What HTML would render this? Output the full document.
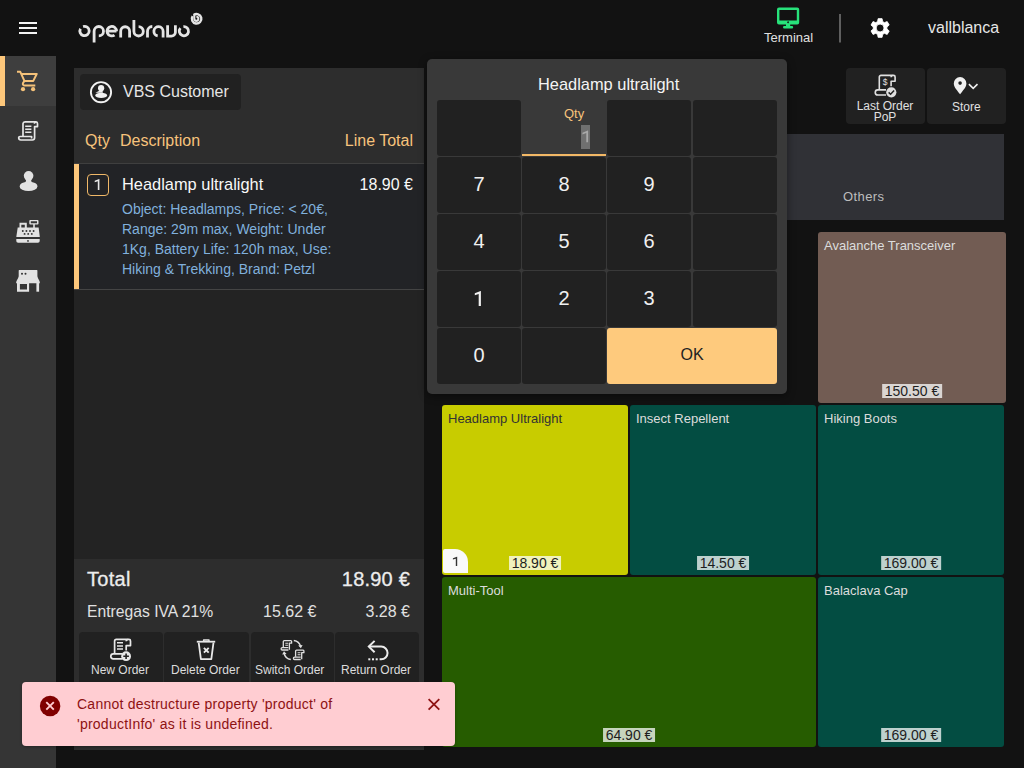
<!DOCTYPE html>
<html><head><meta charset="utf-8">
<style>
*{box-sizing:border-box;margin:0;padding:0}
html,body{width:1024px;height:768px;overflow:hidden;background:#121212;font-family:"Liberation Sans",sans-serif;color:#e6e6e6}
.a{position:absolute}
.t{position:absolute;white-space:nowrap;line-height:1}
svg{position:absolute;overflow:visible}
/* sidebar */
#side{left:0;top:56px;width:56px;height:712px;background:#353535}
#act{left:0;top:56px;width:56px;height:50px;background:#3e3e3e}
#actbar{left:0;top:56px;width:5px;height:50px;background:#fdc77b}
/* order panel */
#panel{left:74px;top:68px;width:350px;height:682px;background:#2d2d2d}
#lines{left:74px;top:164px;width:350px;height:395px;background:#232323}
#sel{left:74px;top:164px;width:350px;height:126px;background:#222326;border-bottom:1px solid #444444}
#selbar{left:74px;top:164px;width:5px;height:125px;background:#fdc77b}
#cust{left:80px;top:74px;width:161px;height:36px;background:#212121;border-radius:4px}
.btn{position:absolute;background:#212121;border-radius:4px}
/* dialog */
#dlg{left:427px;top:59px;width:360px;height:335px;background:#393939;border-radius:5px;box-shadow:0 2px 8px rgba(0,0,0,.45)}
.key{position:absolute;background:#212121;border-radius:3px;color:#f0f0f0;font-size:20px;text-align:center;width:84px;height:56px;line-height:54px}
/* tiles */
.tile{position:absolute;border-radius:3px;overflow:hidden}
.tile .nm{position:absolute;left:6px;top:7px;font-size:13px;color:#dcdcdc;white-space:nowrap;line-height:1}
.tile .pr{position:absolute;bottom:5px;left:50%;transform:translateX(-50%);background:rgba(255,255,255,.74);color:#1e1e1e;font-size:14px;line-height:14px;padding:0 2.6px;white-space:nowrap}
.or{color:#f7c37c}
</style></head><body>

<!-- ===== header ===== -->
<div class="a" style="left:19px;top:22px;width:18px;height:2px;background:#f2f2f2"></div>
<div class="a" style="left:19px;top:27px;width:18px;height:2px;background:#f2f2f2"></div>
<div class="a" style="left:19px;top:32px;width:18px;height:2px;background:#f2f2f2"></div>

<svg width="1024" height="60" style="left:0;top:0" viewBox="0 0 1024 60">
 <g fill="none" stroke="#e4e4e4" stroke-width="2.8">
  <path d="M83.1 26.6 A4.65 4.65 0 1 1 80.5 28.7"/>
  <path d="M94.1 42.4 V31.2 A4.7 4.7 0 1 1 98.8 35.9"/>
  <path d="M116.55 31.2 A4.75 4.75 0 1 0 114.52 35.09 M107.1 31.2 H116.5"/>
  <path d="M120.7 37.5 V31.2 A4.45 4.45 0 0 1 129.6 31.2 V37.5"/>
  <path d="M133.9 20 V31.3 A4.7 4.7 0 1 0 138.6 26.6"/>
  <path d="M147.5 37.5 V31.3 A4.8 4.8 0 0 1 152.3 26.5"/>
  <path d="M163.1 37.5 V31.3 A4.6 4.6 0 1 0 157.7 35.83"/>
  <path d="M167.6 25.2 V36.2 H171.2 A4 4 0 0 0 175.4 32.2 V25.2"/>
  <path d="M183.4 26.6 A4.6 4.6 0 1 1 180.4 28.2"/>
  <path d="M193.7 15 A4.75 4.75 0 1 1 192.6 16.2" stroke-width="2.4"/>
  <path d="M194.3 14.3 V18.8 A2.05 2.05 0 1 0 196.35 16.75" stroke-width="2.1"/>
 </g>
 <!-- terminal -->
 <g fill="#27e27a">
  <path d="M779 7.6 H797.2 A2 2 0 0 1 799.2 9.6 V22.5 A2 2 0 0 1 797.2 24.5 H779 A2 2 0 0 1 777 22.5 V9.6 A2 2 0 0 1 779 7.6 Z M779.4 10.1 V20.5 H796.8 V10.1 Z M788.9 22.3 A0.85 0.85 0 1 0 788.9 22.31Z" fill-rule="evenodd"/>
  <path d="M786 24 H790.2 V26 H792 A1.2 1.2 0 0 1 792 28.4 H784.2 A1.2 1.2 0 0 1 784.2 26 H786Z"/>
 </g>
 <rect x="839" y="14" width="2" height="28.5" fill="#5f5f5f"/>
 <path fill="#ffffff" stroke="#ffffff" stroke-width="0.9" stroke-linejoin="round" fill-rule="evenodd" d="M877.63 21.56 L878.11 18.66 L882.09 18.66 L882.57 21.56 L884.44 22.64 L887.20 21.61 L889.18 25.05 L886.92 26.92 L886.92 29.08 L889.18 30.95 L887.20 34.39 L884.44 33.36 L882.57 34.44 L882.09 37.34 L878.11 37.34 L877.63 34.44 L875.76 33.36 L873.00 34.39 L871.02 30.95 L873.28 29.08 L873.28 26.92 L871.02 25.05 L873.00 21.61 L875.76 22.64ZM884.05 28.0 A3.95 3.95 0 1 0 876.15 28.0 A3.95 3.95 0 1 0 884.05 28.0Z"/>
</svg>
<div class="t" style="left:764px;top:31px;font-size:13px;color:#e0e0e0">Terminal</div>
<div class="t" style="left:928px;top:20px;font-size:16px;color:#e6e6e6">vallblanca</div>

<!-- ===== sidebar ===== -->
<div id="side" class="a"></div>
<div id="act" class="a"></div>
<div id="actbar" class="a"></div>
<svg width="56" height="320" style="left:0;top:0" viewBox="0 0 56 320">
 <g fill="none" stroke="#f5c27a" stroke-width="2" stroke-linejoin="round">
  <path d="M17 71.8 H20.3 L24.4 80.9 H33.3 L36.7 74 H21.4"/>
  <path d="M24.4 80.9 L22.9 83.3 Q22.5 85.4 24.8 85.4 H35.3"/>
 </g>
 <g fill="#f5c27a"><circle cx="23" cy="89.2" r="2.1"/><circle cx="33.1" cy="89.2" r="2.1"/></g>
 <!-- receipt -->
 <g fill="none" stroke="#e6e6e6" stroke-width="1.7" stroke-linejoin="round">
  <path d="M23 136.5 V123.7 A2 2 0 0 1 25 121.9 H36 A1.8 1.8 0 0 1 37.5 123.7 V126.6 H34.6 V137.8 A2.2 2.2 0 0 1 32.4 140 H20.8 A2.2 2.2 0 0 1 18.7 137.8 A1.3 1.3 0 0 1 20 136.5 H31.6 V138.6"/>
  <path d="M34.6 123.8 A1.4 1.4 0 0 1 36 122"/>
  <path d="M25.2 126.2 H31.4 M25.2 129.3 H31.4 M25.2 132.2 H31.4" stroke-width="1.5"/>
 </g>
 <!-- person -->
 <g fill="#e2e2e2">
  <circle cx="28.6" cy="175.8" r="4.8"/>
  <path d="M26.2 179.5 H31 L31.6 182 A8.8 4.3 0 1 1 25.6 182Z"/>
  <ellipse cx="28.5" cy="186.7" rx="8.8" ry="4.3"/>
 </g>
 <!-- register -->
 <g fill="#e2e2e2">
  <path d="M19.5 222.7 H26.8 V228 H19.5Z M21.3 224.7 V227.9 H24.8 V224.7Z" fill-rule="evenodd"/>
  <path d="M30.2 220 H37.6 A0.9 0.9 0 0 1 38.5 220.9 V223.6 A0.9 0.9 0 0 1 37.6 224.5 H34.8 V228 H33.2 V224.5 H30.2 A0.9 0.9 0 0 1 29.3 223.6 V220.9 A0.9 0.9 0 0 1 30.2 220Z M30.8 221.3 V223.2 H37 V221.3Z" fill-rule="evenodd"/>
  <path d="M17.7 227.6 H38.6 L39.8 236.9 H16.3Z"/>
  <path d="M16.3 238.9 H39.7 V241 A1.8 1.8 0 0 1 37.9 242.8 H18.1 A1.8 1.8 0 0 1 16.3 241Z"/>
 </g>
 <g fill="#333333">
  <circle cx="22.8" cy="231" r="0.95"/><circle cx="26.4" cy="231" r="0.95"/><circle cx="30" cy="231" r="0.95"/><circle cx="33.6" cy="231" r="0.95"/>
  <circle cx="24.6" cy="233.9" r="0.95"/><circle cx="28.2" cy="233.9" r="0.95"/><circle cx="31.8" cy="233.9" r="0.95"/>
  <circle cx="28" cy="240.9" r="0.9"/>
 </g>
 <!-- store -->
 <g fill="#e2e2e2">
  <path d="M19.3 270 H36.8 A0.6 0.6 0 0 1 37.4 270.6 V276.3 Q37.7 278.2 39.2 280.6 Q39.9 281.8 39.9 283.3 H16.1 Q16.1 281.8 16.8 280.6 Q18.4 278.2 18.7 276.3 V270.6 A0.6 0.6 0 0 1 19.3 270Z"/>
  <path d="M17 283 H29.1 V291.7 H17Z M19.9 284.1 V289.4 H27 V284.1Z" fill-rule="evenodd"/>
  <rect x="36.4" y="283" width="2.7" height="8.7"/>
 </g>
 <g fill="#333"><circle cx="22" cy="273.7" r="1"/><circle cx="25.5" cy="273.7" r="1"/></g>
</svg>

<!-- ===== order panel ===== -->
<div id="panel" class="a"></div>
<div id="lines" class="a"></div>
<div id="sel" class="a"></div>
<div id="selbar" class="a"></div>
<div id="cust" class="a"></div>
<svg width="30" height="30" style="left:86px;top:76px" viewBox="86 76 30 30">
 <circle cx="101" cy="92.2" r="10.1" fill="none" stroke="#f2f2f2" stroke-width="1.9"/>
 <g fill="#f2f2f2"><circle cx="101.1" cy="88.2" r="3.1"/><path d="M99.8 90.5 H102.4 L102.9 92.8 H95.4 Z"/><ellipse cx="101.2" cy="95.4" rx="5.9" ry="2.6"/></g>
</svg>
<div class="t" style="left:123px;top:84px;font-size:16px;color:#e6e6e6">VBS Customer</div>

<div class="t or" style="left:85px;top:133px;font-size:16px">Qty</div>
<div class="t or" style="left:120px;top:133px;font-size:16px">Description</div>
<div class="t or" style="right:611px;top:133px;font-size:16px">Line Total</div>
<div class="a" style="left:74px;top:163px;width:350px;height:1px;background:#3f3f3f"></div>

<div class="a" style="left:87px;top:174px;width:22px;height:22px;border:1px solid #f0b868;border-radius:4px"></div>
<div class="t" style="left:122px;top:176px;font-size:16.4px;color:#f8f8f8">Headlamp ultralight</div>
<div class="t" style="right:611px;top:177px;font-size:16px;color:#f8f8f8">18.90 €</div>
<div class="a" style="left:122px;top:199px;width:240px;font-size:14px;line-height:20px;color:#80b0dc">Object: Headlamps, Price: &lt; 20€,<br>Range: 29m max, Weight: Under<br>1Kg, Battery Life: 120h max, Use:<br>Hiking &amp; Trekking, Brand: Petzl</div>

<!-- totals -->
<div class="t" style="left:87px;top:569px;font-size:20px;color:#ececec;-webkit-text-stroke:0.3px #ececec;letter-spacing:0.3px">Total</div>
<div class="t" style="right:614px;top:569px;font-size:20px;color:#ececec;-webkit-text-stroke:0.3px #ececec;letter-spacing:0.2px">18.90 €</div>
<div class="t" style="left:87px;top:604px;font-size:15.7px;color:#e0e0e0">Entregas IVA 21%</div>
<div class="t" style="left:263px;top:604px;font-size:16px;color:#e0e0e0">15.62 €</div>
<div class="t" style="right:614px;top:604px;font-size:16px;color:#e0e0e0">3.28 €</div>

<div class="btn" style="left:79px;top:632px;width:84px;height:56px"></div>
<div class="btn" style="left:164px;top:632px;width:85px;height:56px"></div>
<div class="btn" style="left:251px;top:632px;width:83px;height:56px"></div>
<div class="btn" style="left:335px;top:632px;width:84px;height:56px"></div>
<div class="t" style="left:91px;top:664px;font-size:12px;color:#dcdcdc">New Order</div>
<div class="t" style="left:171px;top:664px;font-size:12px;color:#dcdcdc">Delete Order</div>
<div class="t" style="left:255px;top:664px;font-size:12px;color:#dcdcdc">Switch Order</div>
<div class="t" style="left:341px;top:664px;font-size:12px;color:#dcdcdc">Return Order</div>

<svg width="1024" height="768" style="left:0;top:0;z-index:5;pointer-events:none" viewBox="0 0 1024 768">
 <!-- new order -->
 <g fill="none" stroke="#e8e8e8" stroke-width="1.7" stroke-linejoin="round">
  <path d="M114.6 653.2 V641.2 A1.8 1.8 0 0 1 116.4 639.4 H128.9 A1.6 1.6 0 0 1 130.5 641 V645.6 H126.2 V650.5"/>
  <path d="M126.2 641.3 A1.6 1.6 0 0 1 127.8 639.6"/>
  <path d="M122.5 653.8 H113.3 A2.5 2.5 0 0 0 113.3 658.8 H122.5"/>
  <path d="M117 642.7 H123 M117 645.9 H123 M117 649.1 H123" stroke-width="1.5"/>
 </g>
 <circle cx="126.1" cy="656.2" r="4.9" fill="#e8e8e8"/>
 <path d="M123.3 656.2 H128.9 M126.1 653.4 V659" stroke="#222" stroke-width="1.6"/>
 <!-- delete -->
 <g fill="none" stroke="#e8e8e8" stroke-width="1.8" stroke-linejoin="round">
  <path d="M196.8 641.7 H215.2"/>
  <path d="M203.6 641 V640 H209 V641" stroke-width="1.4"/>
  <path d="M198.7 642.6 L200.9 659.1 H211.3 L213.5 642.6"/>
  <path d="M203.9 647.8 L208.7 652.6 M208.7 647.8 L203.9 652.6" stroke-width="1.9"/>
 </g>
 <!-- switch -->
 <g fill="none" stroke="#e0e0e0" stroke-width="1.3" stroke-linejoin="round">
  <path d="M283.3 647.3 V641.6 A1 1 0 0 1 284.3 640.6 H290.8 A0.9 0.9 0 0 1 291.6 641.5 V643.2 H289.4 V649.7"/>
  <path d="M288.4 647.6 H282.3 A1.2 1.2 0 0 0 282.3 650 H288.4"/>
  <path d="M285.3 643.3 H288.2 M285.3 645.3 H288.2" stroke-width="1.1"/>
  <path d="M295.6 656.8 V651.1 A1 1 0 0 1 296.6 650.1 H303.1 A0.9 0.9 0 0 1 303.9 651 V652.7 H301.7 V659.2"/>
  <path d="M300.7 657.1 H294.6 A1.2 1.2 0 0 0 294.6 659.5 H300.7"/>
  <path d="M297.6 652.8 H300.5 M297.6 654.8 H300.5" stroke-width="1.1"/>
  <path d="M293.8 640.6 A8 8 0 0 1 300.6 646.6" stroke-width="1.5"/>
  <path d="M290.8 659.6 A8 8 0 0 1 284.1 653.4" stroke-width="1.5"/>
 </g>
 <path d="M298.2 645.6 L300.9 648.3 L302.6 645" fill="#e0e0e0"/>
 <path d="M282.2 654.4 L284 651.2 L286.6 654" fill="#e0e0e0"/>
 <!-- return -->
 <g fill="none" stroke="#ececec" stroke-width="2" stroke-linejoin="miter">
  <path d="M374.6 640.9 L368.8 646.6 L374.6 652.3"/>
  <path d="M369 646.6 H381.2 A6.35 6.35 0 0 1 381.2 659.3 H379.6"/>
 </g>
 <g fill="#ececec"><rect x="368.3" y="658.3" width="2" height="2"/><rect x="372" y="658.3" width="2" height="2"/><rect x="375.7" y="658.3" width="2" height="2"/></g>
 <!-- last order -->
 <g fill="none" stroke="#e0e0e0" stroke-width="1.6" stroke-linejoin="round">
  <path d="M879.3 89.5 V77.1 A1.7 1.7 0 0 1 881 75.4 H893.6 A1.5 1.5 0 0 1 895.1 76.9 V81.3 H891.1 V86.2"/>
  <path d="M891.1 77.2 A1.6 1.6 0 0 1 892.7 75.5"/>
  <path d="M886 89.9 H877.8 A2.5 2.5 0 0 0 877.8 95 H886"/>
 </g>
 <text x="885" y="84.6" font-family="Liberation Sans" font-size="8.5" fill="#e0e0e0" text-anchor="middle">$</text>
 <circle cx="891.3" cy="92.3" r="5.1" fill="#e0e0e0"/>
 <path d="M888.6 92.4 L890.6 94.3 L894.1 90.6" fill="none" stroke="#222" stroke-width="1.5"/>
 <!-- store pin -->
 <path d="M960.1 94.2 C958 91.2 953.8 87.4 953.8 83.4 A6.3 6.3 0 0 1 966.4 83.4 C966.4 87.4 962.2 91.2 960.1 94.2Z M961.9 83.1 A1.8 1.8 0 1 0 958.3 83.1 A1.8 1.8 0 1 0 961.9 83.1Z" fill="#f0f0f0" fill-rule="evenodd"/>
 <path d="M968.9 84.2 L973.2 88.3 L977.5 84.2" fill="none" stroke="#f0f0f0" stroke-width="1.6"/>
</svg>

<!-- ===== right ===== -->
<div class="btn" style="left:846px;top:68px;width:79px;height:56px"></div>
<div class="btn" style="left:927px;top:68px;width:79px;height:56px"></div>
<div class="t" style="left:855px;top:101px;font-size:12px;color:#e0e0e0;line-height:10.5px;text-align:center;width:60px">Last Order<br>PoP</div>
<div class="t" style="left:952px;top:101px;font-size:12px;color:#e0e0e0">Store</div>

<div class="a" style="left:442px;top:134px;width:562px;height:86px;background:#303136"></div>
<div class="t" style="left:843px;top:190px;font-size:13px;color:#bdbdbd;letter-spacing:0.4px">Others</div>

<div class="tile" style="left:818px;top:232px;width:188px;height:171px;background:#725c53"><div class="nm">Avalanche Transceiver</div><div class="pr">150.50 €</div></div>
<div class="tile" style="left:442px;top:405px;width:186px;height:170px;background:#c8cc00"><div class="nm" style="color:#333">Headlamp Ultralight</div><div class="pr">18.90 €</div><div class="a" style="left:1px;top:144px;width:25px;height:24px;background:#f9f9f9;border-radius:2px 13px 0 2px;color:#2a2a2a;"></div></div>
<div class="tile" style="left:630px;top:405px;width:186px;height:170px;background:#034d42"><div class="nm">Insect Repellent</div><div class="pr">14.50 €</div></div>
<div class="tile" style="left:818px;top:405px;width:186px;height:170px;background:#034d42"><div class="nm">Hiking Boots</div><div class="pr">169.00 €</div></div>
<div class="tile" style="left:442px;top:577px;width:374px;height:170px;background:#265c00"><div class="nm">Multi-Tool</div><div class="pr">64.90 €</div></div>
<div class="tile" style="left:818px;top:577px;width:186px;height:170px;background:#034d42"><div class="nm">Balaclava Cap</div><div class="pr">169.00 €</div></div>

<!-- ===== dialog ===== -->
<div id="dlg" class="a"></div>
<div class="t" style="left:538px;top:76px;font-size:16.4px;color:#f4f4f4">Headlamp ultralight</div>
<div class="key" style="left:437px;top:100px"></div>
<div class="key" style="left:522px;top:100px;background:#393939"></div>
<div class="key" style="left:607px;top:100px"></div>
<div class="key" style="left:693px;top:100px"></div>
<div class="a" style="left:522px;top:154px;width:84px;height:2px;background:#f2b866"></div>
<div class="t or" style="left:564px;top:107px;font-size:13px">Qty</div>
<div class="a" style="left:581px;top:125px;width:9px;height:24px;background:#707070"></div>


<div class="key" style="left:437px;top:157px">7</div>
<div class="key" style="left:522px;top:157px">8</div>
<div class="key" style="left:607px;top:157px">9</div>
<div class="key" style="left:693px;top:157px"></div>
<div class="key" style="left:437px;top:214px">4</div>
<div class="key" style="left:522px;top:214px">5</div>
<div class="key" style="left:607px;top:214px">6</div>
<div class="key" style="left:693px;top:214px"></div>
<div class="key" style="left:437px;top:271px"></div>
<div class="key" style="left:522px;top:271px">2</div>
<div class="key" style="left:607px;top:271px">3</div>
<div class="key" style="left:693px;top:271px"></div>
<div class="key" style="left:437px;top:328px">0</div>
<div class="key" style="left:522px;top:328px"></div>
<div class="key" style="left:607px;top:328px;width:170px;background:#feca7d;color:#222;font-size:16px">OK</div>

<svg width="1024" height="768" style="left:0;top:0;z-index:30;pointer-events:none" viewBox="0 0 1024 768">
 <path d="M480.9 291 V306 H478.7 V294 L474.8 295.3 V293.3 L480.6 291Z" fill="#f0f0f0"/>
 <path d="M99.4 179 V190 H97.8 V181.3 L94.7 182.3 V180.8 L99.1 179Z" fill="#e8e8e8"/>
 <path d="M457.2 556.8 V565.9 H455.8 V558.7 L452.9 559.5 V558.2 L456.9 556.8Z" fill="#333333"/>
 <path d="M588.1 130.5 V142.2 H586.3 V133.1 L582.4 134.4 V132.7 L587.8 130.5Z" fill="#a8a8a8"/>
</svg>
<!-- ===== toast ===== -->
<div class="a" style="left:22px;top:682px;width:433px;height:64px;background:#ffcdd2;border-radius:4px;box-shadow:0 1px 3px rgba(0,0,0,.3)"></div>
<svg width="30" height="30" style="left:35px;top:691px" viewBox="35 691 30 30">
 <circle cx="50.1" cy="706" r="10.25" fill="#800000"/>
 <path d="M46.3 702.2 L53.8 709.7 M53.8 702.2 L46.3 709.7" stroke="#ffcdd2" stroke-width="1.9"/>
</svg>
<div class="a" style="left:77px;top:694px;font-size:14px;line-height:20px;color:#8e1212;letter-spacing:0.24px;white-space:nowrap">Cannot destructure property 'product' of<br>'productInfo' as it is undefined.</div>
<svg width="20" height="20" style="left:424px;top:694px" viewBox="424 694 20 20">
 <path d="M428.6 699.1 L439.3 709.7 M439.3 699.1 L428.6 709.7" stroke="#8e1212" stroke-width="1.8"/>
</svg>

</body></html>
